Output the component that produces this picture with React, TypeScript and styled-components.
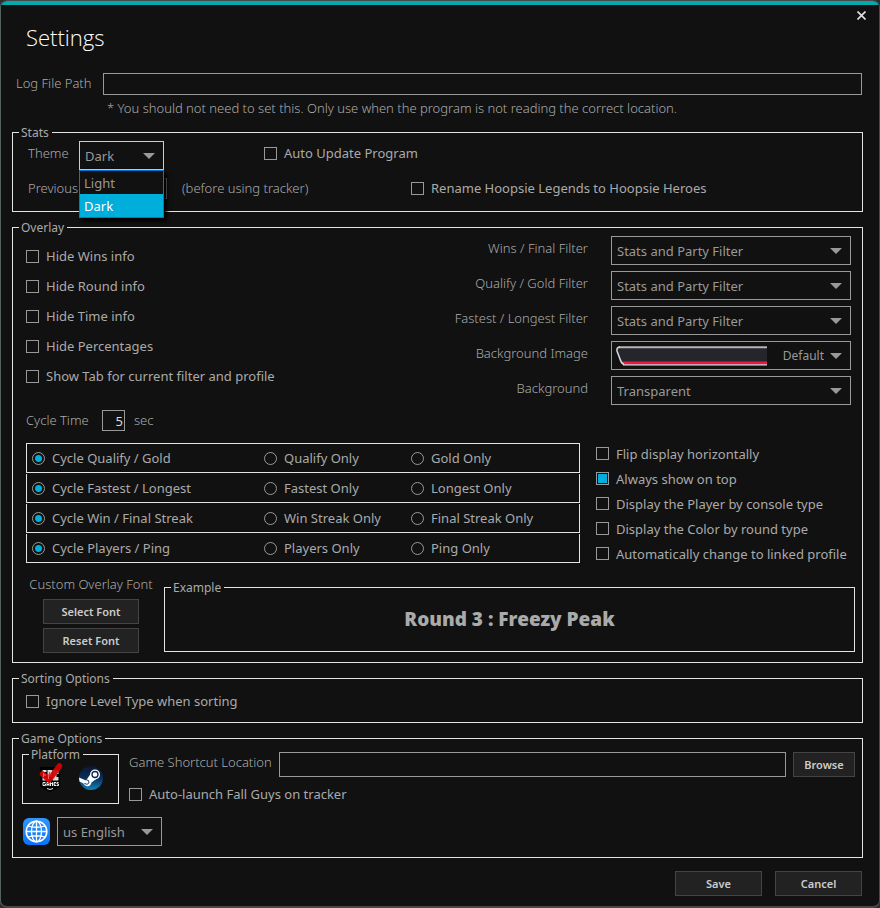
import React, { useId, useState } from 'react';
import styled, { createGlobalStyle, css } from 'styled-components';

const c = {
  back: '#111111',
  accent: '#00aedb',
  teal: '#00aaad',
  line: '#999999',
  frame: '#e4e4e4',
  text: '#aaaaaa',
  soft: '#999999',
};

const GlobalStyle = createGlobalStyle`
  *, *::before, *::after { box-sizing: border-box; }
  html, body { margin: 0; background: #2b2d2e; }
  body, input, select, button {
    font-family: "Noto Sans", "Open Sans", sans-serif;
    font-size: 13px;
    color: ${c.text};
  }
`;

const Window = styled.main`
  min-height: 100vh;
  padding: 0 16px 10px 11px;
  background: ${c.back};
  border: 1px solid #484848;
  border-left-color: #53625e;
  border-bottom-width: 2px;
  border-radius: 7px;
  overflow: hidden;
`;

const TopBar = styled.div`
  height: 4px;
  margin: 0 -16px 0 -11px;
  background: ${c.teal};
`;

const Header = styled.header`
  display: flex;
  justify-content: space-between;
  align-items: flex-start;
  height: 68px;
  padding-left: 14px;
`;

const Title = styled.h1`
  margin: 17px 0 0;
  font: 300 22px/30px "Open Sans", "Noto Sans", sans-serif;
  color: #ffffff;
`;

const CloseButton = styled.button`
  display: grid;
  place-items: center;
  width: 21px;
  height: 21px;
  margin: 0 -9px 0 0;
  padding: 0;
  border: 0;
  background: none;
`;

const Text = styled.span`
  font-weight: 300;
  line-height: 20px;
  white-space: nowrap;
`;

const FieldLabel = styled.label`
  font-weight: 300;
  line-height: 20px;
  white-space: nowrap;
`;

const TextBox = styled.input<{ $h?: number }>`
  flex: 1;
  min-width: 0;
  height: ${(p) => p.$h ?? 22}px;
  padding: 0 4px;
  border: 1px solid ${c.line};
  background: ${c.back};
  outline: none;
`;

const NumberBox = styled.input<{ $w: number }>`
  flex: none;
  width: ${(p) => p.$w}px;
  height: 21px;
  padding: 0 1px;
  border: 1px solid ${c.line};
  background: ${c.back};
  color: #dddddd;
  text-align: right;
  outline: none;
`;

const LogRow = styled.div`
  display: flex;
  align-items: flex-start;
  padding: 0 1px 0 4px;
  ${FieldLabel} { width: 87px; }
`;

const Note = styled.p`
  margin: 3px 0 7px 95px;
  font-weight: 300;
  line-height: 20px;
`;

const Group = styled.fieldset`
  min-width: 0;
  margin: 0 0 8px;
  padding: 0 6px;
  border: 1px solid ${c.frame};
`;

const Legend = styled.legend`
  height: 15px;
  padding: 0 3px 0 2px;
  font-size: 12px;
  line-height: 15px;
`;

const StatsBody = styled.div`
  display: grid;
  row-gap: 8px;
  padding: 1px 0 12px 9px;
`;

const StatsRow = styled.div`
  display: grid;
  grid-template-columns: 236px 147px 1fr;
  align-items: start;
`;

const ThemeCell = styled.div`
  display: flex;
  align-items: flex-start;
  ${FieldLabel} { width: 51px; line-height: 24px; }
`;

const PreviousCell = styled.div`
  grid-column: 1 / 3;
  display: flex;
  align-items: flex-start;
  ${FieldLabel} { width: 87px; }
  ${Text} { margin-left: 15px; }
`;

const Spanned = styled.div<{ $from: number; $h: number }>`
  grid-column: ${(p) => p.$from} / -1;
  display: flex;
  align-items: center;
  height: ${(p) => p.$h}px;
`;

const SelectWrap = styled.div<{ $w?: number }>`
  display: grid;
  align-items: center;
  width: ${(p) => (p.$w ? `${p.$w}px` : '100%')};
  & > * { grid-area: 1 / 1; }
`;

const NativeSelect = styled.select<{ $bare?: boolean; $bright?: boolean }>`
  appearance: none;
  width: 100%;
  height: 29px;
  padding: 1px 26px 0 5px;
  border: 1px solid ${(p) => (p.$bright ? '#cccccc' : c.line)};
  border-radius: 0;
  background: ${c.back};
  color: ${c.soft};
  outline: none;
  ${(p) => p.$bare && css`
    height: 27px;
    border: 0;
    padding: 0 26px 0 0;
    font-size: 12px;
    text-align: right;
    text-align-last: right;
  `}
`;

const Caret = styled.svg<{ $inset?: boolean }>`
  justify-self: end;
  margin-right: ${(p) => (p.$inset ? 8 : 9)}px;
  pointer-events: none;
`;

const MenuAnchor = styled.div`
  position: relative;
`;

const Menu = styled.ul`
  position: absolute;
  z-index: 2;
  top: 29px;
  left: 0;
  right: 0;
  margin: 0;
  padding: 0;
  border: 1px solid #0078d7;
  background: ${c.back};
  list-style: none;
  box-shadow: 3px 3px 4px #000000;
`;

const MenuItem = styled.li<{ $active?: boolean }>`
  padding: 1px 0 0 4px;
  line-height: 22px;
  background: ${(p) => (p.$active ? c.accent : c.back)};
  color: ${(p) => (p.$active ? '#ffffff' : c.soft)};
`;

const OptionLabel = styled.label`
  display: inline-flex;
  align-items: center;
  gap: 7px;
  line-height: 18px;
  white-space: nowrap;
`;

const mark = css`
  appearance: none;
  flex: none;
  width: 13px;
  height: 13px;
  margin: 0;
  border: 1px solid ${c.line};
  background: ${c.back};
`;

const CheckMark = styled.input`
  ${mark}
  &:checked { background: ${c.accent}; box-shadow: inset 0 0 0 1px ${c.back}; }
`;

const RadioMark = styled.input`
  ${mark}
  border-radius: 50%;
  &:checked { background: radial-gradient(circle, ${c.accent} 3px, ${c.back} 4px); }
`;

const OverlayBody = styled.div`
  padding: 1px 1px 9px 7px;
`;

const OverlayTop = styled.div`
  display: flex;
  justify-content: space-between;
`;

const HideList = styled.div`
  display: grid;
  grid-auto-rows: 30px;
  padding-top: 5px;
`;

const FilterList = styled.div`
  display: grid;
  grid-template-columns: auto 240px;
  column-gap: 23px;
  row-gap: 6px;
  margin-right: 4px;
  ${FieldLabel} { line-height: 24px; text-align: right; }
`;

const ImagePicker = styled.div`
  display: flex;
  align-items: center;
  height: 29px;
  border: 1px solid ${c.line};
  padding-left: 4px;
`;

const Thumbnail = styled.svg`
  flex: none;
`;

const CycleRow = styled.div`
  display: flex;
  align-items: flex-start;
  margin: 5px 0 10px;
  ${FieldLabel} { width: 76px; }
  ${Text} { margin-left: 9px; }
`;

const OverlayMiddle = styled.div`
  display: flex;
  gap: 16px;
`;

const RadioTable = styled.div`
  flex: 1;
  display: grid;
  gap: 1px;
  margin-top: 2px;
  align-content: start;
`;

const RadioRow = styled.div`
  display: grid;
  grid-template-columns: 232px 147px 1fr;
  align-items: center;
  height: 29px;
  padding-left: 5px;
  border: 1px solid ${c.frame};
  border-top: 0;
  &:first-child { height: 30px; border-top: 1px solid ${c.frame}; }
`;

const DisplayList = styled.div`
  display: grid;
  grid-auto-rows: 25px;
  width: 259px;
`;

const FontRow = styled.div`
  display: flex;
  gap: 10px;
  margin-top: 9px;
  ${Group} { flex: 1; height: 72px; margin: 5px 0 0; }
`;

const FontControls = styled.div`
  display: flex;
  flex-direction: column;
  align-items: center;
  width: 128px;
  padding-left: 2px;
  gap: 4px;
  ${Text} { margin-bottom: 2px; line-height: 18px; }
`;

const PushButton = styled.button<{ $w: number }>`
  flex: none;
  width: ${(p) => p.$w}px;
  height: 25px;
  padding: 0;
  border: 1px solid #444444;
  background: #222222;
  color: #cccccc;
  font-size: 11px;
  font-weight: 600;
`;

const Sample = styled.p`
  margin: 12px 0 0;
  text-align: center;
  font-size: 19px;
  font-weight: 900;
  line-height: 24px;
`;

const SortBody = styled.div`
  display: flex;
  align-items: center;
  height: 36px;
  padding: 0 0 6px 7px;
`;

const GameBody = styled.div`
  padding: 1px 1px 11px 3px;
`;

const GameTop = styled.div`
  display: flex;
  gap: 10px;
`;

const PlatformGroup = styled(Group)`
  width: 97px;
  height: 57px;
  margin: 0;
`;

const PlatformIcons = styled.div`
  display: flex;
  gap: 16px;
  padding-left: 10px;
`;

const IconButton = styled.button`
  display: block;
  height: 30px;
  padding: 0;
  border: 0;
  background: none;
`;

const GameFields = styled.div`
  flex: 1;
  display: grid;
  align-content: start;
  gap: 8px;
  padding-top: 5px;
`;

const ShortcutRow = styled.div`
  display: flex;
  gap: 7px;
  ${FieldLabel} { width: 143px; }
`;

const LanguageRow = styled.div`
  display: flex;
  align-items: center;
  gap: 6px;
  margin-top: 13px;
`;

const Footer = styled.footer`
  display: flex;
  justify-content: flex-end;
  gap: 13px;
  padding: 5px 1px 0 0;
`;

function Check({ label, on = false }: { label: string; on?: boolean }) {
  return (
    <OptionLabel>
      <CheckMark type="checkbox" defaultChecked={on} />
      {label}
    </OptionLabel>
  );
}

function Arrow({ inset }: { inset?: boolean }) {
  return (
    <Caret $inset={inset} width="12" height="6" viewBox="0 0 12 6" aria-hidden="true">
      <path d="M0 0H12L6 6Z" fill={c.line} />
    </Caret>
  );
}

function Dropdown({ id, value, width, bright }: { id: string; value: string; width?: number; bright?: boolean }) {
  return (
    <SelectWrap $w={width}>
      <NativeSelect id={id} $bright={bright} defaultValue={value}>
        <option>{value}</option>
      </NativeSelect>
      <Arrow />
    </SelectWrap>
  );
}

function FilterRow({ label, value }: { label: string; value: string }) {
  const id = useId();
  return (
    <>
      <FieldLabel htmlFor={id}>{label}</FieldLabel>
      <Dropdown id={id} value={value} />
    </>
  );
}

function OverlayThumb() {
  return (
    <Thumbnail width="151" height="20" viewBox="0 0 151 20" aria-hidden="true">
      <path d="M2 1H151V19H8Q4 17 3 12L1 4Q1 1 3 1Z" fill="#24262c" />
      <path d="M5 16.800H151" stroke="#f5143f" strokeWidth="2.400" />
      <path d="M7 18.800H151" stroke="#f2d7dc" strokeWidth="1.200" />
      <path d="M3 1.200H151" stroke="#b4b4b6" strokeWidth="2" />
      <path d="M8 18.500Q5 17 4 13L1 5Q.5 1 4 1" fill="none" stroke="#d8d8da" strokeWidth="1.500" />
    </Thumbnail>
  );
}

function EpicIcon() {
  return (
    <svg width="24" height="30" viewBox="0 0 24 30" aria-hidden="true">
      <path d="M1 5H19Q21 5 21 7V25L11 30L1 25Z" fill="#000000" />
      <g fill="none" stroke="#dddddd" strokeWidth="1.900">
        <path d="M7.500 9H4.500V17.500H7.500M4.500 13H7" />
        <path d="M9.500 18.500V9H12V14H9.500M14.500 8V18.500M18.500 12V9H16.500V17.500H18.500V15" />
      </g>
      <g fill="none" stroke="#eeeeee" strokeWidth="1">
        <path d="M6.500 20.500H4V23.500H6.500V22H5.500M8 24V20.500H10V24M8 22.500H10M11.500 24V20.500L12.500 22L13.500 20.500V24M17 20.500H15V23.500H17M15 22H16.500M19.500 20.500H18V22H19.500V23.500H17.500" />
        <path d="M8 26.500L11 27.500L14 26.500" />
      </g>
      <path d="M3.500 12L10 18L20.500 4" fill="none" stroke="#d40000" strokeWidth="5.500" strokeLinecap="round" strokeLinejoin="round" opacity=".93" />
      <path d="M4.500 11V15M9.500 12V17M4.500 13H7M9.500 12H12" stroke="#ff5555" strokeWidth="1" />
    </svg>
  );
}

function SteamIcon() {
  return (
    <svg width="24" height="30" viewBox="0 0 24 30" aria-hidden="true">
      <defs>
        <linearGradient id="steam" x1="0" y1="0" x2="0" y2="1">
          <stop offset="0" stopColor="#0a1830" />
          <stop offset=".5" stopColor="#0a2c5c" />
          <stop offset="1" stopColor="#1484b8" />
        </linearGradient>
      </defs>
      <circle cx="12" cy="16" r="12" fill="url(#steam)" />
      <path d="M0 15.500L7 18.500L11.500 12L20 15L12.500 20.500Q11.500 25 7.500 24Q5.500 23.500 4.500 21.500L0.500 19.500Z" fill="#ffffff" />
      <circle cx="16" cy="12.500" r="5" fill="#ffffff" />
      <circle cx="16" cy="12.500" r="3" fill="none" stroke="#0a2850" strokeWidth="1.300" />
      <path d="M5.500 21.500Q8.500 23.500 10 20.800Q10.500 18 7.500 17.800" fill="none" stroke="#0c3c70" strokeWidth="1" />
    </svg>
  );
}

function GlobeIcon() {
  return (
    <svg width="29" height="29" viewBox="0 0 29 29" aria-hidden="true">
      <defs>
        <linearGradient id="globe" x1="0" y1="0" x2="0" y2="1">
          <stop offset="0" stopColor="#2f97ff" />
          <stop offset="1" stopColor="#0874fb" />
        </linearGradient>
      </defs>
      <rect x="1" y="1" width="27" height="27" rx="6" fill="url(#globe)" />
      <g fill="none" stroke="#ffffff" strokeWidth="1.300">
        <circle cx="14.500" cy="14.500" r="10.300" strokeWidth="1.600" />
        <ellipse cx="14.500" cy="14.500" rx="5" ry="10.300" />
        <path d="M14.500 4V25M4 14.500H25M6 9Q14.500 11.500 23 9M6 20Q14.500 17.500 23 20" />
      </g>
    </svg>
  );
}

const radioRows = [
  ['Cycle Qualify / Gold', 'Qualify Only', 'Gold Only'],
  ['Cycle Fastest / Longest', 'Fastest Only', 'Longest Only'],
  ['Cycle Win / Final Streak', 'Win Streak Only', 'Final Streak Only'],
  ['Cycle Players / Ping', 'Players Only', 'Ping Only'],
];

const hideOptions = [
  'Hide Wins info',
  'Hide Round info',
  'Hide Time info',
  'Hide Percentages',
  'Show Tab for current filter and profile',
];

const displayOptions = [
  'Flip display horizontally',
  'Always show on top',
  'Display the Player by console type',
  'Display the Color by round type',
  'Automatically change to linked profile',
];

function ThemePicker() {
  const [theme, setTheme] = useState('Dark');
  return (
    <MenuAnchor>
      <SelectWrap $w={85}>
        <NativeSelect id="theme" $bright value={theme} onChange={(e) => setTheme(e.target.value)}>
          <option>Light</option>
          <option>Dark</option>
        </NativeSelect>
        <Arrow />
      </SelectWrap>
      <Menu role="listbox" aria-label="Theme">
        {['Light', 'Dark'].map((name) => (
          <MenuItem key={name} role="option" aria-selected={name === theme} $active={name === theme} onClick={() => setTheme(name)}>
            {name}
          </MenuItem>
        ))}
      </Menu>
    </MenuAnchor>
  );
}

export default function App() {
  return (
    <>
      <GlobalStyle />
      <Window>
        <TopBar />
        <Header>
          <Title>Settings</Title>
          <CloseButton aria-label="Close">
            <svg width="9" height="9" viewBox="0 0 9 9" aria-hidden="true">
              <path d="M.5 .5L8.500 8.500M8.500 .5L.5 8.500" stroke="#dddddd" strokeWidth="1.700" />
            </svg>
          </CloseButton>
        </Header>

        <LogRow>
          <FieldLabel htmlFor="log">Log File Path</FieldLabel>
          <TextBox id="log" type="text" />
        </LogRow>
        <Note>* You should not need to set this. Only use when the program is not reading the correct location.</Note>

        <Group>
          <Legend>Stats</Legend>
          <StatsBody>
            <StatsRow>
              <ThemeCell>
                <FieldLabel htmlFor="theme">Theme</FieldLabel>
                <ThemePicker />
              </ThemeCell>
              <Spanned $from={2} $h={24}><Check label="Auto Update Program" /></Spanned>
            </StatsRow>
            <StatsRow>
              <PreviousCell>
                <FieldLabel htmlFor="previous">Previous</FieldLabel>
                <NumberBox id="previous" type="text" $w={52} />
                <Text>(before using tracker)</Text>
              </PreviousCell>
              <Spanned $from={3} $h={20}><Check label="Rename Hoopsie Legends to Hoopsie Heroes" /></Spanned>
            </StatsRow>
          </StatsBody>
        </Group>

        <Group>
          <Legend>Overlay</Legend>
          <OverlayBody>
            <OverlayTop>
              <HideList>
                {hideOptions.map((label) => <Check key={label} label={label} />)}
              </HideList>
              <FilterList>
                <FilterRow label="Wins / Final Filter" value="Stats and Party Filter" />
                <FilterRow label="Qualify / Gold Filter" value="Stats and Party Filter" />
                <FilterRow label="Fastest / Longest Filter" value="Stats and Party Filter" />
                <FieldLabel htmlFor="image">Background Image</FieldLabel>
                <ImagePicker>
                  <OverlayThumb />
                  <SelectWrap>
                    <NativeSelect id="image" $bare defaultValue="Default"><option>Default</option></NativeSelect>
                    <Arrow inset />
                  </SelectWrap>
                </ImagePicker>
                <FilterRow label="Background" value="Transparent" />
              </FilterList>
            </OverlayTop>

            <CycleRow>
              <FieldLabel htmlFor="cycle">Cycle Time</FieldLabel>
              <NumberBox id="cycle" type="text" $w={23} defaultValue="5" />
              <Text>sec</Text>
            </CycleRow>

            <OverlayMiddle>
              <RadioTable>
                {radioRows.map((row, r) => (
                  <RadioRow key={row[0]} role="radiogroup" aria-label={row[0]}>
                    {row.map((label, i) => (
                      <OptionLabel key={label}>
                        <RadioMark type="radio" name={`cycle-${r}`} defaultChecked={i === 0} />
                        {label}
                      </OptionLabel>
                    ))}
                  </RadioRow>
                ))}
              </RadioTable>
              <DisplayList>
                {displayOptions.map((label, i) => <Check key={label} label={label} on={i === 1} />)}
              </DisplayList>
            </OverlayMiddle>

            <FontRow>
              <FontControls>
                <Text>Custom Overlay Font</Text>
                <PushButton $w={96}>Select Font</PushButton>
                <PushButton $w={96}>Reset Font</PushButton>
              </FontControls>
              <Group>
                <Legend>Example</Legend>
                <Sample>Round 3 : Freezy Peak</Sample>
              </Group>
            </FontRow>
          </OverlayBody>
        </Group>

        <Group>
          <Legend>Sorting Options</Legend>
          <SortBody><Check label="Ignore Level Type when sorting" /></SortBody>
        </Group>

        <Group>
          <Legend>Game Options</Legend>
          <GameBody>
            <GameTop>
              <PlatformGroup>
                <Legend>Platform</Legend>
                <PlatformIcons>
                  <IconButton aria-label="Epic Games"><EpicIcon /></IconButton>
                  <IconButton aria-label="Steam"><SteamIcon /></IconButton>
                </PlatformIcons>
              </PlatformGroup>
              <GameFields>
                <ShortcutRow>
                  <FieldLabel htmlFor="shortcut">Game Shortcut Location</FieldLabel>
                  <TextBox id="shortcut" type="text" $h={25} />
                  <PushButton $w={62}>Browse</PushButton>
                </ShortcutRow>
                <Check label="Auto-launch Fall Guys on tracker" />
              </GameFields>
            </GameTop>
            <LanguageRow>
              <GlobeIcon />
              <SelectWrap $w={105}>
                <NativeSelect aria-label="Language" defaultValue="us English"><option>us English</option></NativeSelect>
                <Arrow />
              </SelectWrap>
            </LanguageRow>
          </GameBody>
        </Group>

        <Footer>
          <PushButton $w={87}>Save</PushButton>
          <PushButton $w={87}>Cancel</PushButton>
        </Footer>
      </Window>
    </>
  );
}
